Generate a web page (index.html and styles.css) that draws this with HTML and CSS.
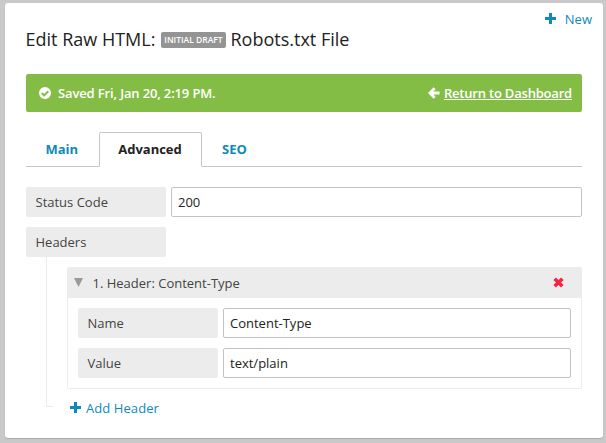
FILE: index.html
```html
<!DOCTYPE html>
<html lang="en">
<head>
<meta charset="utf-8">
<title>Edit Raw HTML</title>
<link rel="stylesheet" href="styles.css">
</head>
<body>
<main class="card">
  <a class="new link"><svg class="plus" viewBox="0 0 11 11"><path d="M4 0h3v4h4v3H7v4H4V7H0V4h4z"/></svg><span>New</span></a>
  <h1 class="title"><span class="title-kind">Edit Raw HTML:</span><span class="badge">INITIAL DRAFT</span><span>Robots.txt File</span></h1>
  <div class="notice">
    <svg class="check" viewBox="0 0 12 12"><circle cx="6" cy="6" r="6"/><path d="M2.8 6l2.3 2.4 4.2-4.2"/></svg>
    <span class="saved">Saved Fri, Jan 20, 2:19 PM.</span>
    <svg class="arrow" viewBox="0 0 12 12"><path d="M6.6 1.2L1.9 6l4.7 4.8M2.2 6H11.5"/></svg>
    <a class="return">Return to Dashboard</a>
  </div>
  <nav class="tabs">
    <a class="tab main"><span>Main</span></a>
    <a class="tab active"><span>Advanced</span></a>
    <a class="tab seo"><span>SEO</span></a>
  </nav>
  <div class="row">
    <div class="label"><span>Status Code</span></div>
    <div class="input"><span>200</span></div>
  </div>
  <div class="row">
    <div class="label"><span>Headers</span></div>
  </div>
  <div class="tree">
    <div class="branch"></div>
    <div class="items">
      <section class="group">
        <header class="group-head">
          <svg class="caret" viewBox="0 0 9 9"><path d="M0 0h9L4.5 9z"/></svg>
          <span class="group-title">1. Header: Content-Type</span>
          <svg class="remove" viewBox="0 0 10 10"><path d="M1.5 1.5l7 7M8.5 1.5l-7 7"/></svg>
        </header>
        <div class="group-body">
          <div class="row">
            <div class="label"><span>Name</span></div>
            <div class="input"><span>Content-Type</span></div>
          </div>
          <div class="row">
            <div class="label"><span>Value</span></div>
            <div class="input"><span>text/plain</span></div>
          </div>
        </div>
      </section>
      <a class="add link"><svg class="plus" viewBox="0 0 11 11"><path d="M4 0h3v4h4v3H7v4H4V7H0V4h4z"/></svg><span class="add-text">Add Header</span></a>
    </div>
  </div>
</main>
</body>
</html>
```
FILE: styles.css
```css
* { box-sizing: border-box; }
body {
  margin: 0;
  padding: 3px 3px 5px 5px;
  height: 443px;
  overflow: hidden;
  background: #c9c9c9;
  color: #222;
  font: 13px/20px "Open Sans", sans-serif;
}
svg { flex: none; display: block; }
.card {
  position: relative;
  height: 435px;
  padding: 23px 21px 0;
  background: #fff;
  border-radius: 3px;
  box-shadow: 0 1px 1px #aaa;
}
.link { display: flex; align-items: center; color: #0d8abc; }
.plus { width: 11px; height: 11px; margin-top: -1px; fill: currentColor; }
.new { position: absolute; top: 6px; right: 11px; gap: 9px; }
.title {
  display: flex;
  align-items: center;
  height: 26px;
  margin: 0 0 22px;
  font-size: 18px;
  font-weight: 400;
  white-space: nowrap;
}
.title-kind { width: 135px; margin-left: -0.5px; }
.badge {
  display: flex;
  align-items: center;
  justify-content: center;
  width: 65px;
  height: 16px;
  margin: 1px 4.5px 0 0.5px;
  background: #949494;
  border-radius: 2px;
  color: #fff;
  font-size: 8.5px;
  font-weight: 600;
}
.notice {
  display: flex;
  align-items: center;
  height: 38px;
  margin-bottom: 20px;
  padding: 0 10px 0 13px;
  background: #84bd45;
  border-radius: 2px;
  color: #fff;
}
.check { width: 12px; height: 12px; margin-right: 7px; fill: #fff; }
.check path { fill: none; stroke: #84bd45; stroke-width: 2; }
.saved { font-weight: 600; letter-spacing: -0.14px; }
.arrow { width: 12px; height: 12px; margin: 0 4px 0 auto; fill: none; stroke: #fff; stroke-width: 2.8; }
.return { font-weight: 600; letter-spacing: -0.2px; text-decoration: underline; }
.tabs { display: flex; height: 35px; margin-bottom: 20px; }
.tab {
  display: flex;
  align-items: center;
  border-bottom: 1px solid #c6c6c6;
  color: #0d8abc;
  font-weight: 700;
}
.main { width: 73px; padding-left: 19.5px; }
.active {
  width: 103px;
  justify-content: center;
  padding: 0 1px 1px 0;
  border: 1px solid #c6c6c6;
  border-bottom-color: transparent;
  border-radius: 2px 2px 0 0;
  color: #222;
}
.seo { flex: 1; padding-left: 20px; }
.row { display: flex; gap: 5px; height: 30px; margin-bottom: 10px; }
.label {
  width: 140px;
  padding: 5px 9.5px;
  background: #ececec;
  border-radius: 2px;
  color: #444;
}
.input {
  flex: 1;
  padding: 4px 6px;
  background: #fff;
  border: 1px solid #c3c3c3;
  border-radius: 2px;
}
.tree { display: flex; margin-top: -10px; padding-left: 20px; }
.branch {
  width: 8px;
  height: 150px;
  margin-right: 13px;
  border: solid #ececec;
  border-width: 0 0 1px 1px;
}
.items { flex: 1; padding-top: 10px; }
.group { height: 122px; border: 1px solid #ececec; border-top: 0; border-radius: 2px; }
.group-head {
  display: flex;
  align-items: center;
  height: 31px;
  margin: 0 -1px;
  padding: 0 18px 0 6.5px;
  background: #ececec;
  border-radius: 2px 2px 0 0;
  color: #444;
}
.caret { width: 9px; height: 9px; margin-right: 10px; fill: #999; }
.remove { width: 11px; height: 11px; margin-left: auto; fill: none; stroke: #f5243f; stroke-width: 3.2; }
.group-body { padding: 10px 10px 0; }
.add { height: 20px; margin: 9px 0 0 3px; gap: 5px; }
.add-text { letter-spacing: 0.08px; }
```
